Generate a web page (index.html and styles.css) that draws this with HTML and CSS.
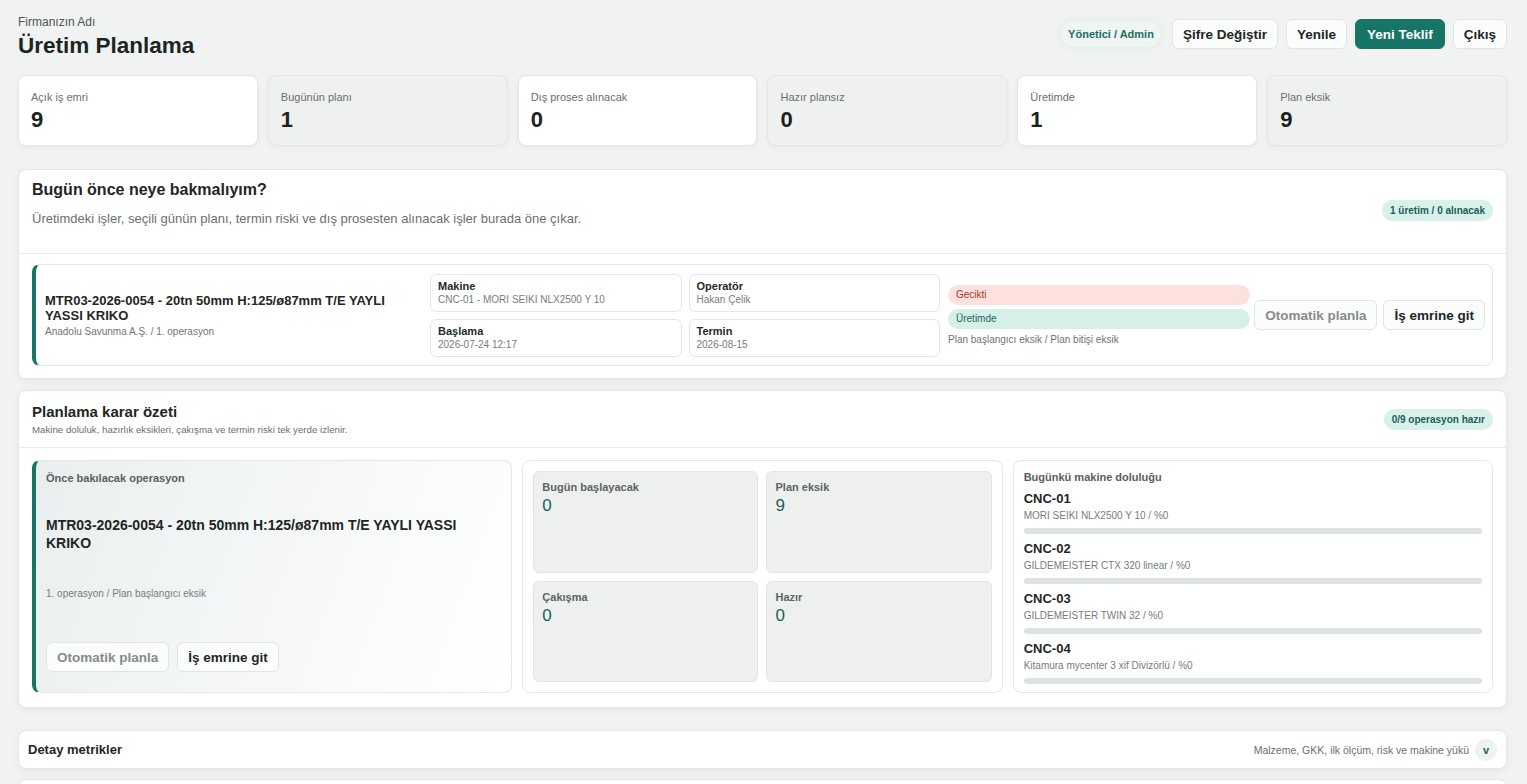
FILE: index.html
```html
<!DOCTYPE html>
<html lang="tr">
<head>
  <meta charset="UTF-8">
  <meta name="viewport" content="width=device-width, initial-scale=1.0">
  <title>Üretim Planlama</title>
  <link rel="stylesheet" href="styles.css">
</head>
<body>
  <div class="page">
    <!-- Üst başlık -->
    <header class="topbar">
      <div class="brand">
        <div class="brand-sub">Firmanızın Adı</div>
        <h1 class="brand-title">Üretim Planlama</h1>
      </div>
      <div class="top-actions">
        <span class="role-pill">Yönetici / Admin</span>
        <button class="btn">Şifre Değiştir</button>
        <button class="btn">Yenile</button>
        <button class="btn btn-primary">Yeni Teklif</button>
        <button class="btn">Çıkış</button>
      </div>
    </header>

    <!-- Özet kartları -->
    <section class="kpis">
      <div class="kpi"><div class="kpi-label">Açık iş emri</div><div class="kpi-value">9</div></div>
      <div class="kpi kpi-alt"><div class="kpi-label">Bugünün planı</div><div class="kpi-value">1</div></div>
      <div class="kpi"><div class="kpi-label">Dış proses alınacak</div><div class="kpi-value">0</div></div>
      <div class="kpi kpi-alt"><div class="kpi-label">Hazır plansız</div><div class="kpi-value">0</div></div>
      <div class="kpi"><div class="kpi-label">Üretimde</div><div class="kpi-value">1</div></div>
      <div class="kpi kpi-alt"><div class="kpi-label">Plan eksik</div><div class="kpi-value">9</div></div>
    </section>

    <!-- Bugün önce neye bakmalıyım -->
    <section class="panel">
      <div class="panel-head panel-head-lg">
        <div>
          <h2 class="panel-title">Bugün önce neye bakmalıyım?</h2>
          <p class="panel-desc">Üretimdeki işler, seçili günün planı, termin riski ve dış prosesten alınacak işler burada öne çıkar.</p>
        </div>
        <span class="count-pill">1 üretim / 0 alınacak</span>
      </div>
      <div class="panel-body">
        <div class="job-row">
          <div class="job-info">
            <div class="job-title">MTR03-2026-0054 - 20tn 50mm H:125/ø87mm T/E YAYLI YASSI KRIKO</div>
            <div class="job-sub">Anadolu Savunma A.Ş. / 1. operasyon</div>
          </div>
          <div class="job-fields">
            <div class="field"><div class="field-label">Makine</div><div class="field-value">CNC-01 - MORI SEIKI NLX2500 Y 10</div></div>
            <div class="field"><div class="field-label">Operatör</div><div class="field-value">Hakan Çelik</div></div>
            <div class="field"><div class="field-label">Başlama</div><div class="field-value">2026-07-24 12:17</div></div>
            <div class="field"><div class="field-label">Termin</div><div class="field-value">2026-08-15</div></div>
          </div>
          <div class="job-status">
            <span class="status status-late">Gecikti</span>
            <span class="status status-prod">Üretimde</span>
            <div class="status-note">Plan başlangıcı eksik / Plan bitişi eksik</div>
          </div>
          <div class="job-actions">
            <button class="btn btn-muted">Otomatik planla</button>
            <button class="btn">İş emrine git</button>
          </div>
        </div>
      </div>
    </section>

    <!-- Planlama karar özeti -->
    <section class="panel">
      <div class="panel-head">
        <div>
          <h2 class="panel-title panel-title-sm">Planlama karar özeti</h2>
          <p class="panel-desc-sm">Makine doluluk, hazırlık eksikleri, çakışma ve termin riski tek yerde izlenir.</p>
        </div>
        <span class="count-pill">0/9 operasyon hazır</span>
      </div>
      <div class="panel-body decision-grid">
        <div class="focus-card">
          <div class="mini-title">Önce bakılacak operasyon</div>
          <div class="focus-title">MTR03-2026-0054 - 20tn 50mm H:125/ø87mm T/E YAYLI YASSI KRIKO</div>
          <div class="focus-sub">1. operasyon / Plan başlangıcı eksik</div>
          <div class="focus-actions">
            <button class="btn btn-muted">Otomatik planla</button>
            <button class="btn">İş emrine git</button>
          </div>
        </div>

        <div class="box-card tile-grid">
          <div class="tile"><div class="tile-label">Bugün başlayacak</div><div class="tile-value">0</div></div>
          <div class="tile"><div class="tile-label">Plan eksik</div><div class="tile-value">9</div></div>
          <div class="tile"><div class="tile-label">Çakışma</div><div class="tile-value">0</div></div>
          <div class="tile"><div class="tile-label">Hazır</div><div class="tile-value">0</div></div>
        </div>

        <div class="box-card">
          <div class="mini-title">Bugünkü makine doluluğu</div>
          <div class="machine">
            <div class="machine-name">CNC-01</div>
            <div class="machine-sub">MORI SEIKI NLX2500 Y 10 / %0</div>
            <div class="load-bar"><div class="load-fill" style="width: 0%"></div></div>
          </div>
          <div class="machine">
            <div class="machine-name">CNC-02</div>
            <div class="machine-sub">GILDEMEISTER CTX 320 linear / %0</div>
            <div class="load-bar"><div class="load-fill" style="width: 0%"></div></div>
          </div>
          <div class="machine">
            <div class="machine-name">CNC-03</div>
            <div class="machine-sub">GILDEMEISTER TWIN 32 / %0</div>
            <div class="load-bar"><div class="load-fill" style="width: 0%"></div></div>
          </div>
          <div class="machine">
            <div class="machine-name">CNC-04</div>
            <div class="machine-sub">Kitamura mycenter 3 xif Divizörlü / %0</div>
            <div class="load-bar"><div class="load-fill" style="width: 0%"></div></div>
          </div>
        </div>
      </div>
    </section>

    <!-- Detay metrikler -->
    <section class="panel collapse-bar">
      <div class="collapse-title">Detay metrikler</div>
      <div class="collapse-right">
        <span class="collapse-hint">Malzeme, GKK, ilk ölçüm, risk ve makine yükü</span>
        <span class="chevron">v</span>
      </div>
    </section>

    <section class="panel panel-next"></section>
  </div>
</body>
</html>
```

FILE: styles.css
```css
/* genel */
* {
  margin: 0;
  padding: 0;
  box-sizing: border-box;
}

body {
  background-color: #f1f3f2;
  font-family: "Liberation Sans", Arial, "Noto Sans CJK SC", sans-serif;
  color: #1f2624;
}

.page {
  padding: 14px 20px 0 18px;
}

button {
  font-family: inherit;
}

/* üst başlık */
.topbar {
  display: flex;
  justify-content: space-between;
  align-items: center;
  height: 46px;
}

.brand-sub {
  font-size: 12px;
  color: #4d5553;
  margin-top: 2px;
}

.brand-title {
  font-size: 22.5px;
  font-weight: bold;
  color: #1d2523;
  line-height: 30px;
  margin-top: 2px;
}

.top-actions {
  display: flex;
  align-items: center;
  gap: 8px;
  margin-top: -6px;
}

.role-pill {
  background-color: #eef5f3;
  color: #1d6f63;
  font-size: 11px;
  font-weight: bold;
  padding: 7px 7px;
  border-radius: 14px;
  margin-right: 3px;
  box-shadow: 0 0 8px rgba(210, 232, 226, 0.7);
}

.btn {
  background-color: #fbfcfc;
  color: #1f2624;
  border: 1px solid #e1e5e3;
  border-radius: 6px;
  font-size: 13.5px;
  font-weight: bold;
  height: 30px;
  padding: 0 10px;
  cursor: pointer;
  white-space: nowrap;
}

.btn-primary {
  background-color: #177567;
  border-color: #177567;
  color: #fff;
  padding: 0 11px;
}

.btn-muted {
  color: #868c8a;
}

/* özet kartları */
.kpis {
  display: grid;
  grid-template-columns: repeat(6, 1fr);
  gap: 10px;
  margin-top: 15px;
}

.kpi {
  height: 71px;
  background-color: #fff;
  border: 1px solid #e2e6e4;
  border-radius: 8px;
  padding: 15px 12px;
  box-shadow: 0 2px 6px rgba(0, 0, 0, 0.04);
}

.kpi-alt {
  background-color: #eef1f0;
}

.kpi-label {
  font-size: 11px;
  color: #6a706e;
}

.kpi-value {
  font-size: 22px;
  font-weight: bold;
  margin-top: 4px;
  color: #1c2321;
}

/* paneller */
.panel {
  background-color: #fff;
  border: 1px solid #e3e7e5;
  border-radius: 8px;
  box-shadow: 0 2px 8px rgba(0, 0, 0, 0.05);
  margin-top: 11px;
}

.kpis + .panel {
  margin-top: 23px;
}

.panel-head {
  display: flex;
  justify-content: space-between;
  align-items: center;
  padding: 12px 13px 12px;
  border-bottom: 1px solid #e6eae8;
}

.panel-head-lg {
  padding: 11px 13px 27px;
}

.panel-title {
  font-size: 16px;
  font-weight: bold;
  color: #1f2624;
}

.panel-title-sm {
  font-size: 15px;
}

.panel-desc {
  font-size: 13px;
  color: #6a706e;
  margin-top: 12px;
}

.panel-desc-sm {
  font-size: 9.7px;
  color: #6a706e;
  margin-top: 4px;
}

.count-pill {
  background-color: #d8f1eb;
  color: #1c5f55;
  font-size: 10px;
  font-weight: bold;
  padding: 5px 8px;
  border-radius: 10px;
  white-space: nowrap;
}

.panel-head-lg .count-pill {
  margin-top: 14px;
}

.panel-body {
  padding: 10px 13px 12px;
}

/* iş satırı */
.job-row {
  display: grid;
  grid-template-columns: 1fr 510px 302px 227px;
  gap: 8px;
  align-items: center;
  border: 1px solid #e3e7e5;
  border-left: 4px solid #177567;
  border-radius: 8px;
  padding: 8px 7px 8px 9px;
  height: 102px;
}

.job-title {
  font-size: 13px;
  font-weight: bold;
  line-height: 15px;
  color: #1f2624;
  padding-right: 30px;
}

.job-sub {
  font-size: 10px;
  color: #6e7472;
  margin-top: 3px;
}

.job-fields {
  display: grid;
  grid-template-columns: 1fr 1fr;
  gap: 7px;
}

.field {
  border: 1px solid #e2e6e4;
  border-radius: 6px;
  padding: 5px 7px;
  height: 38px;
}

.field-label {
  font-size: 11px;
  font-weight: bold;
  color: #242b29;
}

.field-value {
  font-size: 10px;
  color: #777d7b;
  margin-top: 2px;
}

.job-status {
  display: flex;
  flex-direction: column;
  gap: 4px;
}

.status {
  display: block;
  font-size: 10px;
  padding: 4px 8px;
  border-radius: 10px;
  height: 20px;
}

.status-late {
  background-color: #fde1de;
  color: #a9372c;
}

.status-prod {
  background-color: #d6f0e9;
  color: #17685c;
}

.status-note {
  font-size: 10px;
  color: #6e7472;
  margin-top: 1px;
}

.job-actions {
  display: flex;
  gap: 6px;
  justify-content: flex-end;
}

/* karar özeti */
.decision-grid {
  display: grid;
  grid-template-columns: repeat(3, 1fr);
  gap: 10px;
  padding-top: 12px;
  padding-bottom: 14px;
}

.focus-card {
  border: 1px solid #e3e7e5;
  border-left: 4px solid #177567;
  border-radius: 8px;
  background: linear-gradient(110deg, #e9efee 0%, #f6f8f8 55%, #ffffff 100%);
  padding: 11px 10px 20px;
  height: 233px;
  display: flex;
  flex-direction: column;
}

.mini-title {
  font-size: 11px;
  font-weight: bold;
  color: #59605e;
}

.focus-title {
  font-size: 14px;
  font-weight: bold;
  line-height: 18px;
  color: #1f2624;
  margin-top: 32px;
}

.focus-sub {
  font-size: 10px;
  color: #777d7b;
  margin-top: 36px;
}

.focus-actions {
  display: flex;
  gap: 8px;
  margin-top: auto;
}

.box-card {
  border: 1px solid #e3e7e5;
  border-radius: 8px;
  padding: 10px;
  height: 233px;
}

.tile-grid {
  display: grid;
  grid-template-columns: 1fr 1fr;
  grid-template-rows: 1fr 1fr;
  gap: 8px;
}

.tile {
  background-color: #edf0ef;
  border: 1px solid #e0e5e3;
  border-radius: 6px;
  padding: 9px 8px;
}

.tile-label {
  font-size: 11px;
  font-weight: bold;
  color: #5d6462;
}

.tile-value {
  font-size: 17px;
  color: #1b6358;
  margin-top: 3px;
}

.machine {
  margin-top: 7px;
}

.mini-title + .machine {
  margin-top: 8px;
}

.machine-name {
  font-size: 13px;
  font-weight: bold;
  color: #1f2624;
}

.machine-sub {
  font-size: 10px;
  color: #767c7a;
  margin-top: 4px;
}

.load-bar {
  height: 6px;
  background-color: #dde3e1;
  border-radius: 3px;
  margin-top: 7px;
  overflow: hidden;
}

.load-fill {
  height: 100%;
  background-color: #177567;
}

/* detay metrikler */
.collapse-bar {
  display: flex;
  justify-content: space-between;
  align-items: center;
  height: 39px;
  padding: 0 9px;
  margin-top: 22px;
}

.collapse-title {
  font-size: 13px;
  font-weight: bold;
  color: #1f2624;
}

.collapse-right {
  display: flex;
  align-items: center;
  gap: 6px;
}

.collapse-hint {
  font-size: 10.5px;
  color: #6a706e;
}

.chevron {
  width: 22px;
  height: 22px;
  border-radius: 50%;
  background-color: #eff2f1;
  color: #1b6358;
  font-size: 11px;
  font-weight: bold;
  display: flex;
  align-items: center;
  justify-content: center;
}

.panel-next {
  height: 40px;
  margin-top: 10px;
}
```
